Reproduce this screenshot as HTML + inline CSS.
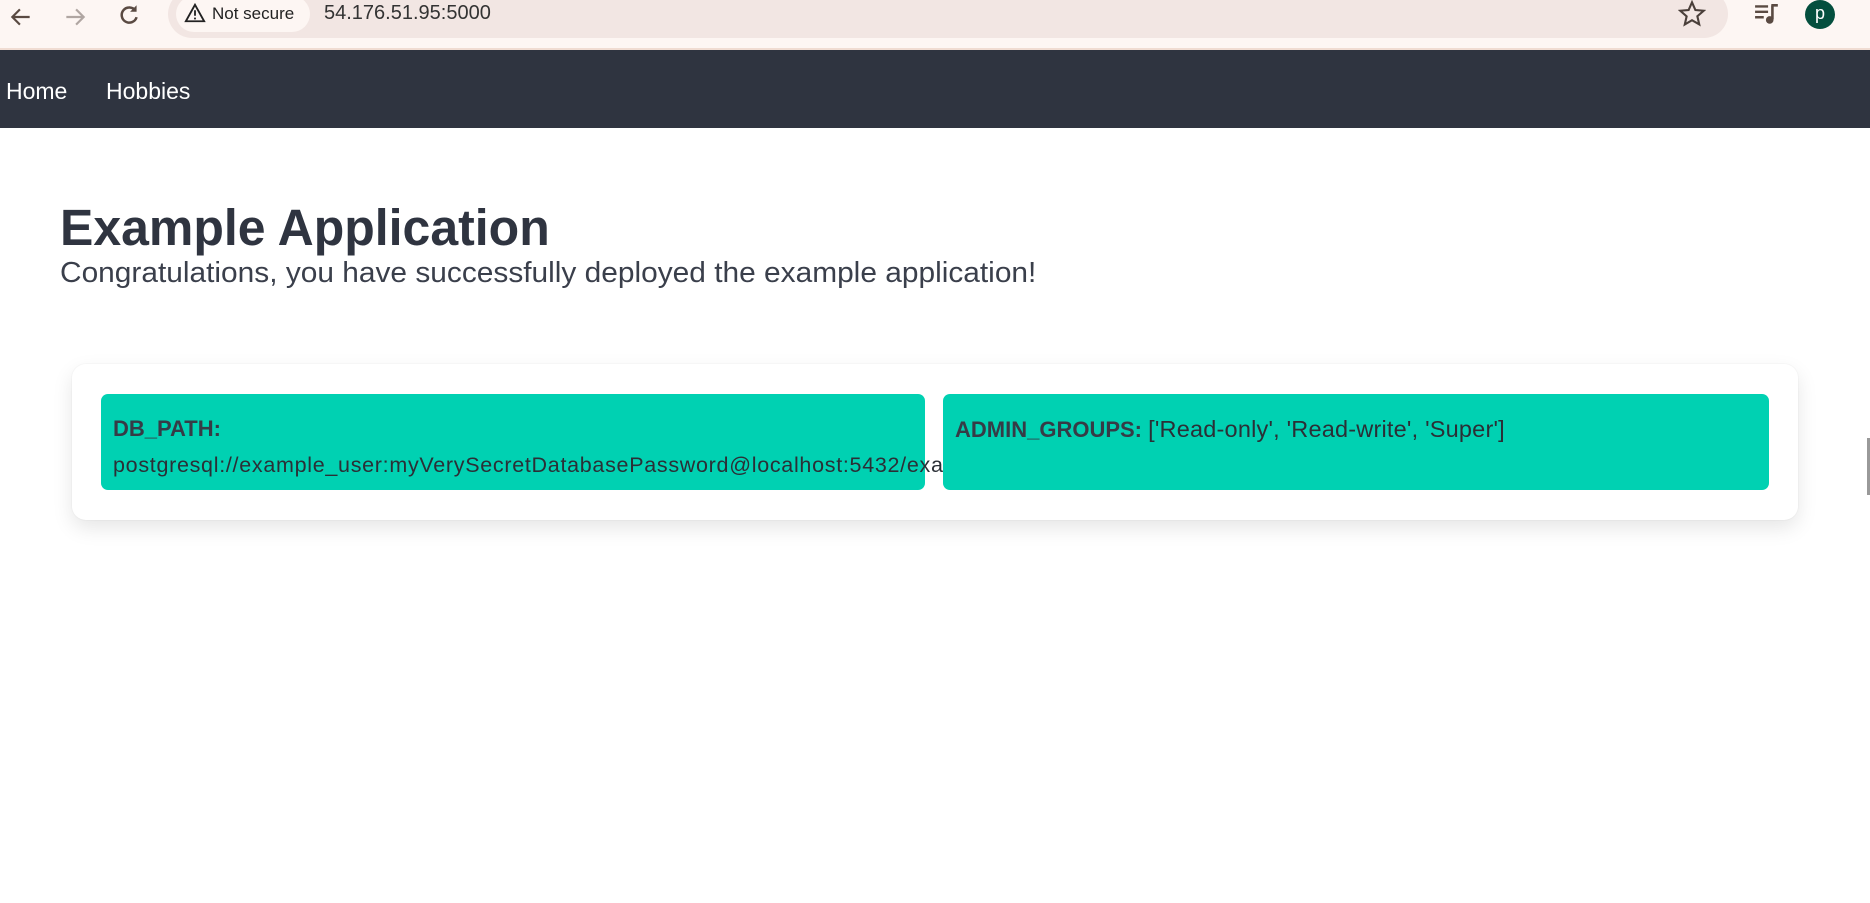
<!DOCTYPE html>
<html><head><meta charset="utf-8"><style>
*{margin:0;padding:0;box-sizing:border-box}
html,body{width:1870px;height:903px;overflow:hidden;background:#fff;font-family:"Liberation Sans",sans-serif}
.chrome{position:absolute;left:0;top:0;width:1870px;height:50px;background:#fdf6f3;border-bottom:2px solid #f0dcd2}
.pill{position:absolute;left:168px;top:-10px;width:1560px;height:48px;border-radius:24px;background:#f2e6e3}
.ns{position:absolute;left:176px;top:-4px;height:36px;width:134px;border-radius:18px;background:#fdf6f3;font-size:17px;color:#222;line-height:36px;padding-left:36px}
.url{position:absolute;left:324px;top:2px;font-size:20px;color:#333}
.nav{position:absolute;left:0;top:50px;width:1870px;height:78px;background:#2f3440}
.nav a{position:absolute;top:28px;color:#fff;font-size:23px;text-decoration:none}
h1{position:absolute;left:60px;top:198px;font-size:51px;font-weight:bold;color:#2f3440;white-space:nowrap;transform:scaleX(.98);transform-origin:left}
.sub{position:absolute;left:60px;top:257px;font-size:29px;color:#3a3f4b;white-space:nowrap;transform:scaleX(1.03);transform-origin:left}
.card{position:absolute;left:72px;top:364px;width:1726px;height:156px;background:#fff;border-radius:14px;box-shadow:0 8px 20px rgba(0,0,0,.1),0 0 0 1px rgba(0,0,0,.02)}
.box{position:absolute;top:394px;height:96px;background:#00d1b2;border-radius:7px;color:#2b2f36;font-size:22px;padding:17px 12px;line-height:36px;white-space:nowrap}
.b{font-weight:bold;color:#363b46}
</style></head><body>
<div class="chrome">
<svg style="position:absolute;left:8px;top:4px" width="26" height="26" viewBox="0 0 24 24"><path d="M20 12H5M11 5l-7 7 7 7" fill="none" stroke="#5a4a42" stroke-width="2"/></svg>
<svg style="position:absolute;left:62px;top:4px" width="26" height="26" viewBox="0 0 24 24"><path d="M4 12h15M13 5l7 7-7 7" fill="none" stroke="#b0a6a2" stroke-width="2"/></svg>
<svg style="position:absolute;left:116px;top:2px" width="26" height="26" viewBox="0 0 24 24"><path d="M18 8a7 7 0 1 0 1 6" fill="none" stroke="#5a4a42" stroke-width="2.3"/><path d="M19 3v6h-6" fill="#5a4a42"/></svg>
<div class="pill"></div>
<div class="ns"><svg style="position:absolute;left:8px;top:6px" width="22" height="22" viewBox="0 0 24 24"><path d="M12 3L2 21h20z" fill="none" stroke="#222" stroke-width="2"/><path d="M12 9v6M12 17v2" stroke="#222" stroke-width="2"/></svg>Not secure</div>
<div class="url">54.176.51.95:5000</div>
<svg style="position:absolute;left:1678px;top:0" width="28" height="28" viewBox="0 0 24 24"><path d="M12 2l2.9 6.6 7.1.6-5.4 4.7 1.6 7L12 17.3 5.8 21l1.6-7L2 9.2l7.1-.6z" fill="none" stroke="#4a3f3a" stroke-width="1.8"/></svg>
<svg style="position:absolute;left:1754px;top:2px" width="26" height="24" viewBox="0 0 24 22"><path d="M1 4h12M1 9h12M1 14h8" stroke="#5a4a42" stroke-width="2.2"/><path d="M16 3h6M17 3v13" stroke="#5a4a42" stroke-width="2.4"/><circle cx="14.5" cy="16.5" r="3.5" fill="#5a4a42"/></svg>
<div style="position:absolute;left:1805px;top:0;width:30px;height:29px;border-radius:50%;background:#044f3e;color:#fff;font-size:18px;text-align:center;line-height:26px">p</div>
</div>
<div class="nav"><a style="left:6px">Home</a><a style="left:106px">Hobbies</a></div>
<h1>Example Application</h1>
<div class="sub">Congratulations, you have successfully deployed the example application!</div>
<div class="card"></div>
<div class="box" style="left:101px;width:824px"><span class="b">DB_PATH:</span><br><span style="font-size:21.5px;letter-spacing:0.7px">postgresql://example_user:myVerySecretDatabasePassword@localhost:5432/example</span></div>
<div class="box" style="left:943px;width:826px"><span class="b">ADMIN_GROUPS:</span> <span style="font-size:23.5px;letter-spacing:0.2px">['Read-only', 'Read-write', 'Super']</span></div>
<div style="position:absolute;left:1867px;top:438px;width:3px;height:57px;background:#999"></div>
</body></html>
